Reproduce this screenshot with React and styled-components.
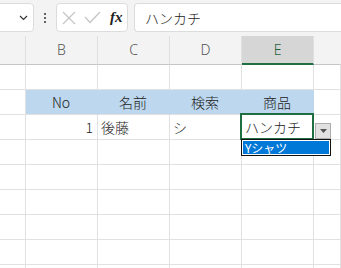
import React from "react";
import styled, { createGlobalStyle } from "styled-components";

const Global = createGlobalStyle`
  html, body { margin: 0; padding: 0; background: #fff; overflow: hidden; }
  body { font-family: "Noto Sans CJK JP", "Noto Sans", sans-serif; }
`;

const Page = styled.div`
  width: 341px;
  height: 268px;
  overflow: hidden;
  position: relative;
  background: #fff;
`;

const FormulaBar = styled.div`
  height: 36px;
  background: #f3f3f3;
  display: flex;
  align-items: flex-start;
  padding-top: 3px;
  box-sizing: border-box;
`;

const NameBox = styled.div`
  margin-left: -10px;
  width: 44px;
  height: 29px;
  box-sizing: border-box;
  background: #fff;
  border: 1px solid #dcdcdc;
  border-radius: 4px;
  display: flex;
  align-items: center;
  justify-content: flex-end;
  padding-right: 5px;
`;

const Dots = styled.div`
  width: 22px;
  height: 29px;
  display: flex;
  flex-direction: column;
  align-items: center;
  justify-content: center;
  gap: 2px;
  span {
    width: 2px;
    height: 2px;
    background: #333;
    border-radius: 1px;
  }
`;

const FxBox = styled.div`
  width: 72px;
  height: 29px;
  box-sizing: border-box;
  background: #fff;
  border: 1px solid #dcdcdc;
  border-radius: 4px;
  display: flex;
  align-items: center;
  padding-left: 5px;
  gap: 8px;
`;

const Fx = styled.span`
  font-family: "Liberation Serif", "DejaVu Serif", serif;
  font-style: italic;
  font-weight: bold;
  font-size: 15px;
  color: #222;
  margin-left: 1px;
`;

const FormulaInput = styled.div`
  margin-left: 6px;
  flex: 1;
  height: 29px;
  box-sizing: border-box;
  background: #fff;
  border: 1px solid #dcdcdc;
  border-right: none;
  border-radius: 4px 0 0 4px;
  display: flex;
  align-items: center;
  padding-left: 10px;
  font-size: 14px;
  font-weight: 300;
  color: #222;
`;

const Sheet = styled.div`
  display: grid;
  grid-template-columns: 26px 72px 72px 72px 72px 1fr;
  grid-auto-rows: 25px;
  grid-template-rows: 29px;
`;

const ColHead = styled.div`
  background: ${(p) => (p.$selected ? "#d6d6d6" : "#f3f3f3")};
  border-right: 1px solid ${(p) => (p.$last ? "transparent" : "#e0e0e0")};
  border-bottom: ${(p) => (p.$selected ? "2px solid #1e6e42" : "1px solid #c6c6c6")};
  box-sizing: border-box;
  display: flex;
  align-items: center;
  justify-content: center;
  font-family: "Noto Sans", sans-serif;
  font-size: 14px;
  font-weight: 300;
  color: ${(p) => (p.$selected ? "#1e5e38" : "#555")};
  padding-bottom: 1px;
`;

const Cell = styled.div`
  box-sizing: border-box;
  border-right: 1px solid ${(p) => (p.$fill ? p.$fill : "#e1e1e1")};
  border-bottom: 1px solid #e1e1e1;
  background: ${(p) => p.$fill || "#fff"};
  display: flex;
  align-items: center;
  justify-content: ${(p) =>
    p.$align === "right" ? "flex-end" : p.$align === "center" ? "center" : "flex-start"};
  padding: 0 4px 0 3px;
  font-size: 14px;
  font-weight: 300;
  color: #222;
  white-space: nowrap;
  overflow: visible;
`;

const Selection = styled.div`
  position: absolute;
  left: 240px;
  top: 113px;
  width: 74px;
  height: 27px;
  box-sizing: border-box;
  border: 2px solid #1e6e42;
  pointer-events: none;
`;

const DropButton = styled.div`
  position: absolute;
  left: 315px;
  top: 123px;
  width: 16px;
  height: 16px;
  box-sizing: border-box;
  background: #e1e1e1;
  border: 1px solid #adadad;
  display: flex;
  align-items: center;
  justify-content: center;
`;

const DropList = styled.div`
  position: absolute;
  left: 241px;
  top: 139px;
  width: 90px;
  height: 17px;
  box-sizing: border-box;
  border: 1px solid #111;
  background: #fff;
  padding: 1px;
`;

const DropItem = styled.div`
  height: 100%;
  background: #0078d7;
  color: #fff;
  font-size: 12px;
  line-height: 13px;
  padding-left: 2px;
  display: flex;
  align-items: center;
`;

const cols = ["B", "C", "D", "E"];
const blue = "#bdd7ee";

const rows = [
  [null, null, null, null],
  [
    { t: "No", a: "center", f: blue },
    { t: "名前", a: "center", f: blue },
    { t: "検索", a: "center", f: blue },
    { t: "商品", a: "center", f: blue },
  ],
  [
    { t: "1", a: "right" },
    { t: "後藤" },
    { t: "シ" },
    { t: "ハンカチ" },
  ],
  [null, null, null, null],
  [null, null, null, null],
  [null, null, null, null],
  [null, null, null, null],
  [null, null, null, null],
  [null, null, null, null],
];

export default function App() {
  return (
    <Page>
      <Global />
      <FormulaBar>
        <NameBox>
          <svg width="9" height="6" viewBox="0 0 9 6">
            <path d="M1 1 L4.5 4.5 L8 1" fill="none" stroke="#333" strokeWidth="1.2" />
          </svg>
        </NameBox>
        <Dots>
          <span />
          <span />
          <span />
        </Dots>
        <FxBox>
          <svg width="14" height="14" viewBox="0 0 14 14">
            <path d="M1 1 L13 13 M13 1 L1 13" stroke="#c4c4c4" strokeWidth="1.2" fill="none" />
          </svg>
          <svg width="17" height="13" viewBox="0 0 17 13">
            <path d="M1 6 L6 11.5 L16 1" stroke="#c4c4c4" strokeWidth="1.2" fill="none" />
          </svg>
          <Fx>fx</Fx>
        </FxBox>
        <FormulaInput>ハンカチ</FormulaInput>
      </FormulaBar>
      <Sheet>
        <ColHead />
        {cols.map((c) => (
          <ColHead key={c} $selected={c === "E"}>
            {c}
          </ColHead>
        ))}
        <ColHead $last />
        {rows.map((r, i) => (
          <React.Fragment key={i}>
            <Cell />
            {r.map((c, j) => (
              <Cell key={j} $align={c?.a} $fill={c?.f}>
                {c?.t}
              </Cell>
            ))}
            <Cell />
          </React.Fragment>
        ))}
      </Sheet>
      <Selection />
      <DropButton>
        <svg width="7" height="4" viewBox="0 0 7 4">
          <path d="M0 0 L7 0 L3.5 4 Z" fill="#555" />
        </svg>
      </DropButton>
      <DropList>
        <DropItem>Yシャツ</DropItem>
      </DropList>
    </Page>
  );
}
